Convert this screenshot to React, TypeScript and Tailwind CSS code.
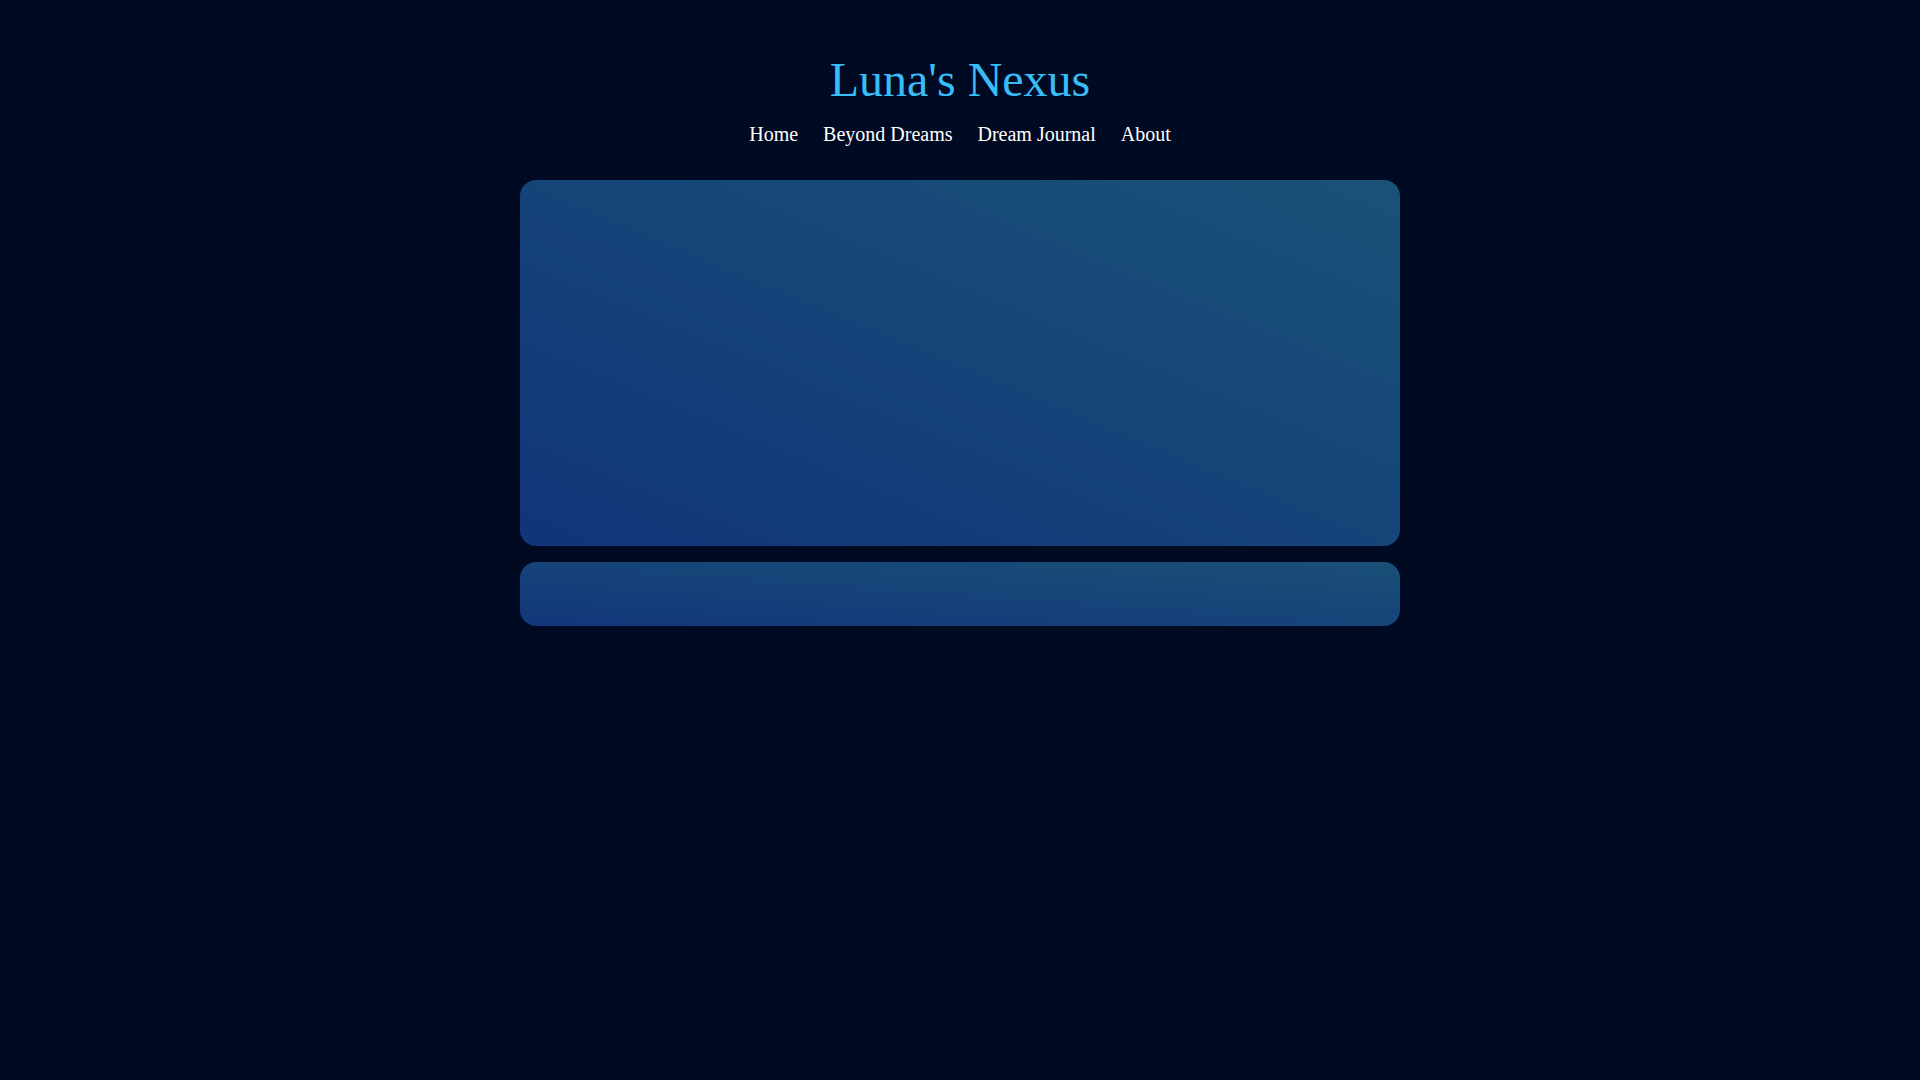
import React from "react";

export default function App() {
  const links = ["Home", "Beyond Dreams", "Dream Journal", "About"];
  return (
    <div
      className="min-h-screen w-full bg-[#010a23] text-white"
      style={{ fontFamily: '"Liberation Serif", "Times New Roman", serif' }}
    >
      <header className="flex flex-col items-center pt-[52px]">
        <h1 className="text-[48px] leading-[55px] font-normal text-[#38bdf8]">
          Luna's Nexus
        </h1>
        <nav className="mt-[16px] flex gap-[25px] text-[20px] leading-[23px] text-white">
          {links.map((l) => (
            <a key={l} href="#" className="text-white">
              {l}
            </a>
          ))}
        </nav>
      </header>
      <main className="mx-auto mt-[34px] flex w-[880px] flex-col gap-[16px]">
        <section className="h-[366px] rounded-2xl bg-gradient-to-tr from-[#12347a] to-[#1a5277]" />
        <section className="h-[64px] rounded-2xl bg-gradient-to-tr from-[#13367b] to-[#1a5077]" />
      </main>
    </div>
  );
}
